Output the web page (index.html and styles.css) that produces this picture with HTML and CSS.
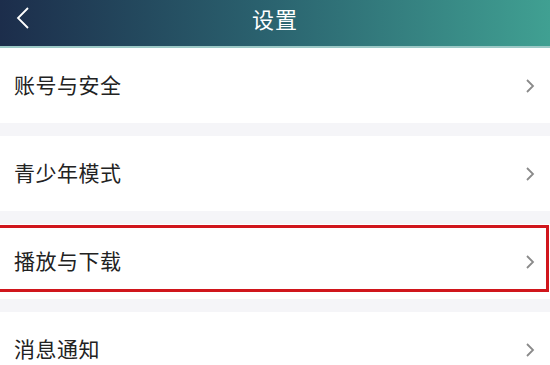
FILE: index.html
```html
<!DOCTYPE html>
<html lang="zh-CN">
<head>
    <meta charset="UTF-8">
    <title>设置</title>
    <link rel="stylesheet" href="styles.css">
</head>
<body>
    <div class="header">
        <svg class="back" width="14" height="24" viewBox="0 0 14 24">
            <path d="M12 2 L2 12 L12 22" fill="none" stroke="#ffffff" stroke-width="1.8"/>
        </svg>
        <div class="title">设置</div>
    </div>

    <div class="list">
        <div class="row">
            <span>账号与安全</span>
            <svg class="arrow" width="10" height="16" viewBox="0 0 10 16"><path d="M2 2 L8 8 L2 14" fill="none" stroke="#8a8a8a" stroke-width="1.8"/></svg>
        </div>
        <div class="gap"></div>
        <div class="row">
            <span>青少年模式</span>
            <svg class="arrow" width="10" height="16" viewBox="0 0 10 16"><path d="M2 2 L8 8 L2 14" fill="none" stroke="#8a8a8a" stroke-width="1.8"/></svg>
        </div>
        <div class="gap"></div>
        <div class="row">
            <span>播放与下载</span>
            <svg class="arrow" width="10" height="16" viewBox="0 0 10 16"><path d="M2 2 L8 8 L2 14" fill="none" stroke="#8a8a8a" stroke-width="1.8"/></svg>
            <div class="mark"></div>
        </div>
        <div class="gap"></div>
        <div class="row">
            <span>消息通知</span>
            <svg class="arrow" width="10" height="16" viewBox="0 0 10 16"><path d="M2 2 L8 8 L2 14" fill="none" stroke="#8a8a8a" stroke-width="1.8"/></svg>
        </div>
    </div>
</body>
</html>
```

FILE: styles.css
```css
body {
    margin: 0;
    font-family: "Noto Sans CJK SC", "Noto Sans", sans-serif;
    background: #ffffff;
    overflow: hidden;
}

.header {
    height: 46px;
    display: flex;
    align-items: center;
    justify-content: center;
    background: linear-gradient(to right, #1c2d4b, #2b6470 50%, #40a092);
    border-bottom: 2px solid #9cc9c6;
    position: relative;
}

.back {
    position: absolute;
    left: 16px;
    top: 6px;
}

.title {
    color: #ffffff;
    font-size: 22px;
    margin-top: -10px;
    letter-spacing: 1px;
}

.list {
    height: 317px;
    overflow: hidden;
}

.row {
    height: 75px;
    display: flex;
    align-items: center;
    justify-content: space-between;
    padding: 0 14px 0 14px;
    font-size: 21px;
    color: #222222;
    position: relative;
}

.row span {
    letter-spacing: 0.5px;
    margin-top: -4px;
}

.arrow {
    margin-right: 1px;
}

.gap {
    height: 13px;
    background: #f5f5f8;
}

.mark {
    position: absolute;
    left: -3px;
    right: 1px;
    top: 1px;
    bottom: 7px;
    border: 3px solid #d0161c;
}
```
